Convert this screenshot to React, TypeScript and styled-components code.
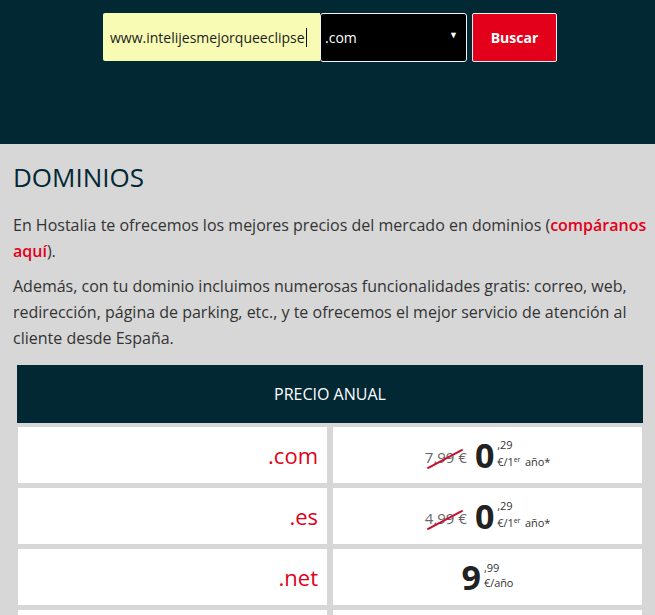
import React from "react";
import styled, { createGlobalStyle } from "styled-components";

const Global = createGlobalStyle`
  html, body { margin: 0; padding: 0; }
  body {
    background: #d7d7d7;
    font-family: "Open Sans", "Liberation Sans", sans-serif;
    color: #333;
    overflow: hidden;
  }
`;

const Hero = styled.header`
  background: #022834;
  height: 144px;
  box-sizing: border-box;
  padding: 13px 0 0 103px;
`;

const SearchForm = styled.form`
  display: flex;
  align-items: stretch;
  height: 49px;
`;

const Field = styled.div`
  width: 217px;
  box-sizing: border-box;
  background: #f7fbb4;
  border-radius: 2px 0 0 2px;
  padding: 0 0 0 7px;
  display: flex;
  align-items: center;
  font-size: 14px;
  color: #1c1c1c;
  height: 48px;
`;

const Caret = styled.span`
  display: inline-block;
  width: 1px;
  height: 19px;
  background: #111;
  margin-left: 1px;
`;

const Select = styled.div`
  width: 147px;
  box-sizing: border-box;
  background: #000;
  border: 1px solid #f2f2f2;
  border-radius: 3px;
  color: #fff;
  font-size: 14px;
  display: flex;
  align-items: center;
  justify-content: space-between;
  padding: 0 8px 0 4px;
`;

const Arrow = styled.span`
  font-size: 9px;
  margin-top: -6px;
`;

const Button = styled.button`
  margin-left: 5px;
  width: 85px;
  box-sizing: border-box;
  background: #e2001a;
  border: 1px solid #f0f0f0;
  border-radius: 2px;
  color: #fff;
  font-family: "Open Sans", "Liberation Sans", sans-serif;
  font-weight: 700;
  font-size: 14px;
  padding: 0;
`;

const Section = styled.section`
  padding: 18px 0 0 13px;
`;

const Title = styled.h1`
  margin: 0 0 20px;
  font-size: 26px;
  font-weight: 400;
  line-height: 1.2;
  color: #022834;
`;

const Para = styled.p`
  margin: 0 0 10px;
  font-size: 16px;
  line-height: 25.6px;
  color: #333;
`;

const Red = styled.a`
  color: #e2001a;
  font-weight: 600;
  text-decoration: none;
`;

const Table = styled.div`
  margin: 14px 12px 0 4px;
`;

const TableHead = styled.div`
  background: #022834;
  color: #fff;
  height: 58px;
  display: flex;
  align-items: center;
  justify-content: center;
  font-size: 16px;
  margin-bottom: 4px;
`;

const Rows = styled.div`
  display: grid;
  grid-template-columns: 309px 309px;
  column-gap: 6px;
  row-gap: 5px;
  margin: 0 1px;
`;

const Cell = styled.div<{ $align: "right" | "center" }>`
  background: #fff;
  height: 56px;
  display: flex;
  align-items: center;
  justify-content: ${(p) => (p.$align === "right" ? "flex-end" : "center")};
  padding-right: ${(p) => (p.$align === "right" ? "9px" : "0")};
`;

const Ext = styled.span`
  color: #e2001a;
  font-size: 22px;
  padding-top: 0;
`;

const Old = styled.span`
  position: relative;
  color: #666;
  font-size: 15px;
  margin-right: 8px;
  margin-top: 4px;
  &::after {
    content: "";
    position: absolute;
    left: 0;
    right: 2px;
    top: 52%;
    height: 2px;
    background: #c8102e;
    transform: rotate(-28deg);
  }
`;

const Big = styled.span`
  font-size: 34px;
  font-weight: 700;
  color: #222;
  line-height: 1;
`;

const Stack = styled.span`
  display: flex;
  flex-direction: column;
  margin-left: 3px;
  font-size: 11px;
  line-height: 15px;
  color: #333;
  margin-top: -4px;
  letter-spacing: -0.1px;
`;

const Sup = styled.sup`
  font-size: 7px;
  vertical-align: 4px;
  margin-right: 2px;
`;

type Row = { ext: string; old?: string; int: string; dec: string; firstYear?: boolean };

const rows: Row[] = [
  { ext: ".com", old: "7,99 €", int: "0", dec: ",29", firstYear: true },
  { ext: ".es", old: "4,99 €", int: "0", dec: ",29", firstYear: true },
  { ext: ".net", int: "9", dec: ",99" },
  { ext: ".org", int: "9", dec: ",99" },
];

export default function App() {
  return (
    <>
      <Global />
      <Hero>
        <SearchForm onSubmit={(e) => e.preventDefault()}>
          <Field>
            www.intelijesmejorqueeclipse<Caret />
          </Field>
          <Select>
            <span>.com</span>
            <Arrow>▼</Arrow>
          </Select>
          <Button type="submit">Buscar</Button>
        </SearchForm>
      </Hero>
      <Section>
        <Title>DOMINIOS</Title>
        <Para>
          En Hostalia te ofrecemos los mejores precios del mercado en dominios (
          <Red href="#">compáranos aquí</Red>).
        </Para>
        <Para>
          Además, con tu dominio incluimos numerosas funcionalidades gratis: correo, web,
          redirección, página de parking, etc., y te ofrecemos el mejor servicio de atención al
          cliente desde España.
        </Para>
        <Table>
          <TableHead>PRECIO ANUAL</TableHead>
          <Rows>
            {rows.map((r) => (
              <React.Fragment key={r.ext}>
                <Cell $align="right">
                  <Ext>{r.ext}</Ext>
                </Cell>
                <Cell $align="center">
                  {r.old && <Old>{r.old}</Old>}
                  <Big>{r.int}</Big>
                  <Stack>
                    <span>{r.dec}</span>
                    {r.firstYear ? (
                      <span>
                        €/1<Sup>er</Sup> año*
                      </span>
                    ) : (
                      <span>€/año</span>
                    )}
                  </Stack>
                </Cell>
              </React.Fragment>
            ))}
          </Rows>
        </Table>
      </Section>
    </>
  );
}
